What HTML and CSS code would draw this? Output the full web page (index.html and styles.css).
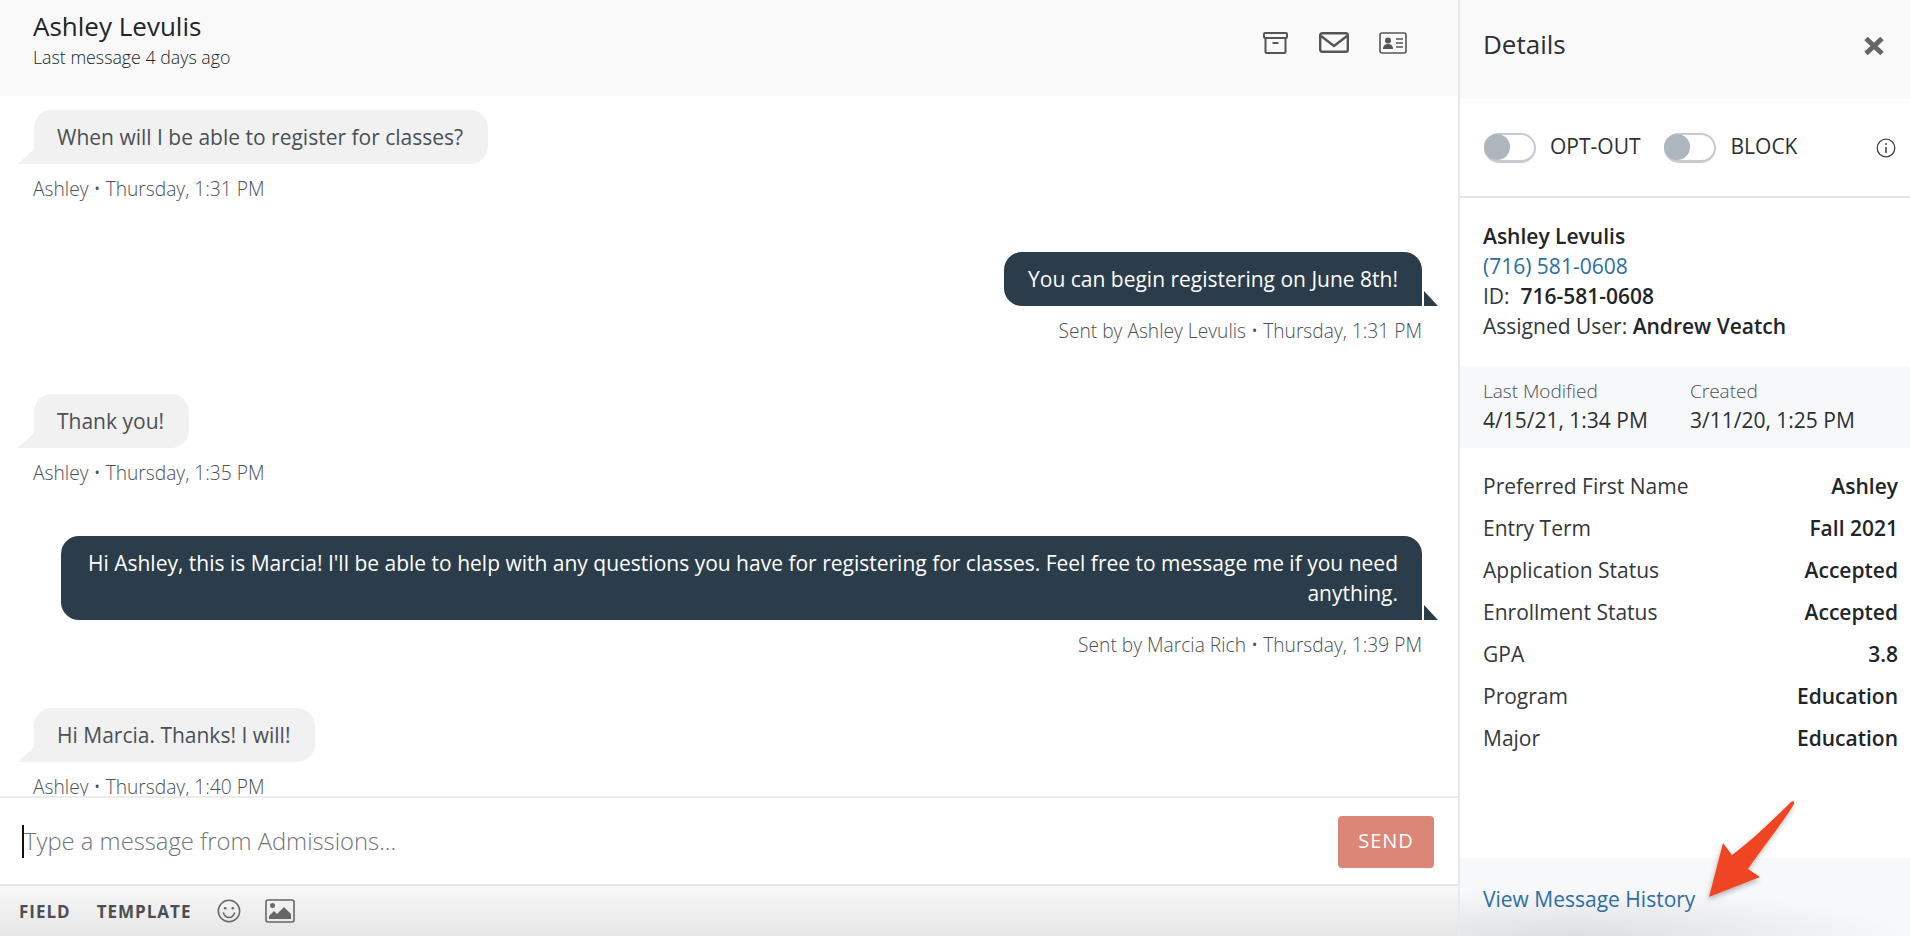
FILE: index.html
```html
<!DOCTYPE html>
<html lang="en">
<head>
<meta charset="utf-8">
<title>Conversation</title>
<link rel="stylesheet" href="styles.css">
</head>
<body>
<div class="app">
  <main class="chat">
    <header class="chat-head">
      <div class="who">
        <div class="who-name">Ashley Levulis</div>
        <div class="who-sub">Last message 4 days ago</div>
      </div>
      <div class="head-icons">
        <svg class="ic-archive" viewBox="0 0 25 22" fill="none" stroke="#555" stroke-width="2"><rect x="1" y="1" width="23" height="5" rx="1"/><path d="M2.5 6v14a1 1 0 0 0 1 1h18a1 1 0 0 0 1-1V6"/><path d="M9.5 11h6"/></svg>
        <svg class="ic-mail" viewBox="0 0 30 21" fill="none" stroke="#555" stroke-width="2.4"><rect x="1.200" y="1.200" width="27.600" height="18.600" rx="2"/><path d="M2 4l13 10L28 4"/></svg>
        <svg class="ic-card" viewBox="0 0 28 22" fill="none"><rect x="1" y="1" width="26" height="20" rx="2" stroke="#555" stroke-width="1.6"/><circle cx="9" cy="8.5" r="3" fill="#555"/><path d="M4 17c0-3.500 2-5 5-5s5 1.500 5 5z" fill="#555"/><path d="M17 7h7M17 11h7M17 15h7" stroke="#555" stroke-width="1.400"/></svg>
      </div>
    </header>
    <section class="messages">
      <article class="msg in">
        <div class="bubble">When will I be able to register for classes?</div>
        <div class="meta">Ashley • Thursday, 1:31 PM</div>
      </article>
      <article class="msg out">
        <div class="bubble">You can begin registering on June 8th!</div>
        <div class="meta">Sent by Ashley Levulis • Thursday, 1:31 PM</div>
      </article>
      <article class="msg in">
        <div class="bubble">Thank you!</div>
        <div class="meta">Ashley • Thursday, 1:35 PM</div>
      </article>
      <article class="msg out">
        <div class="bubble">Hi Ashley, this is Marcia! I'll be able to help with any questions you have for registering for classes. Feel free to message me if you need anything.</div>
        <div class="meta">Sent by Marcia Rich • Thursday, 1:39 PM</div>
      </article>
      <article class="msg in">
        <div class="bubble">Hi Marcia. Thanks! I will!</div>
        <div class="meta">Ashley • Thursday, 1:40 PM</div>
      </article>
    </section>
    <div class="composer">
      <div class="field"><span class="caret"></span><span class="placeholder">Type a message from Admissions...</span></div>
      <button class="send">SEND</button>
    </div>
    <div class="toolbar">
      <span class="tool">FIELD</span>
      <span class="tool">TEMPLATE</span>
      <svg class="ic-smile" viewBox="0 0 24 24" fill="none" stroke="#666" stroke-width="1.500"><circle cx="12" cy="12" r="10.700"/><circle cx="8.200" cy="9.300" r="1.300" fill="#666" stroke="none"/><circle cx="15.800" cy="9.300" r="1.300" fill="#666" stroke="none"/><path d="M6.500 14c1 3 3 4.500 5.500 4.500s4.500-1.500 5.500-4.500" stroke-linecap="round"/></svg>
      <svg class="ic-image" viewBox="0 0 30 24" fill="none"><rect x="1" y="1" width="28" height="22" rx="2" stroke="#666" stroke-width="1.600"/><circle cx="7.500" cy="6.500" r="2.500" fill="#666"/><path d="M4 20v-3l5-5 3 3 7-7 7 7v5z" fill="#666"/></svg>
    </div>
  </main>
  <aside class="details">
    <div class="det-head">
      <span class="det-title">Details</span>
      <svg class="ic-close" viewBox="0 0 22 20" fill="none" stroke="#666" stroke-width="5"><path d="M3 2.500l16 15M19 2.500l-16 15"/></svg>
    </div>
    <div class="det-toggles">
      <span class="toggle"><span class="knob"></span></span>
      <span class="tog-label">OPT-OUT</span>
      <span class="toggle second"><span class="knob"></span></span>
      <span class="tog-label">BLOCK</span>
      <svg class="ic-info" viewBox="0 0 20 20" fill="none" stroke="#444" stroke-width="1.300"><circle cx="10" cy="10" r="8.800"/><path d="M10 9v6" stroke-width="1.600"/><circle cx="10" cy="6" r="1" fill="#444" stroke="none"/></svg>
    </div>
    <div class="contact">
      <div class="strong">Ashley Levulis</div>
      <div class="phone">(716) 581-0608</div>
      <div>ID:&nbsp; <span class="strong">716-581-0608</span></div>
      <div>Assigned User: <span class="strong">Andrew Veatch</span></div>
    </div>
    <div class="dates">
      <div class="date-col modified"><div class="date-label">Last Modified</div><div>4/15/21, 1:34 PM</div></div>
      <div class="date-col"><div class="date-label">Created</div><div>3/11/20, 1:25 PM</div></div>
    </div>
    <dl class="attrs">
      <div class="attr"><dt>Preferred First Name</dt><dd>Ashley</dd></div>
      <div class="attr"><dt>Entry Term</dt><dd>Fall 2021</dd></div>
      <div class="attr"><dt>Application Status</dt><dd>Accepted</dd></div>
      <div class="attr"><dt>Enrollment Status</dt><dd>Accepted</dd></div>
      <div class="attr"><dt>GPA</dt><dd>3.8</dd></div>
      <div class="attr"><dt>Program</dt><dd>Education</dd></div>
      <div class="attr"><dt>Major</dt><dd>Education</dd></div>
    </dl>
    <div class="det-foot"><a class="history">View Message History</a></div>
  </aside>
  <svg class="arrow" viewBox="1690 790 120 120">
    <defs><filter id="sh" x="-20%" y="-20%" width="140%" height="140%"><feDropShadow dx="-1" dy="3" stdDeviation="2.500" flood-color="#000" flood-opacity="0.280"/></filter></defs>
    <path d="M1709 897L1723 843L1732 855C1750 842 1775 818 1791 802C1793 800 1795 802 1794 804C1782 824 1762 848 1748 869L1760 877Z" fill="#f04423" filter="url(#sh)"/>
  </svg>
</div>
</body>
</html>
```
FILE: styles.css
```css
* { box-sizing: border-box; }
html, body { margin: 0; height: 100%; overflow: hidden; background: #fff; }
body { font-family: "Open Sans", "Liberation Sans", sans-serif; color: #212529; font-size: 21px; }
.app { position: relative; display: flex; width: 1910px; height: 936px; }

.chat { width: 1460px; border-right: 2px solid #e9e9e9; display: flex; flex-direction: column; flex: none; }
.chat-head { height: 96px; background: #f9f9f9; padding: 10px 0 0 33px; display: flex; justify-content: space-between; flex: none; }
.who-name { font-size: 26px; line-height: 33px; color: #212529; }
.who-sub { font-size: 17.800px; line-height: 28px; font-weight: 300; color: #212529; }
.head-icons { display: flex; align-items: flex-start; padding: 22px 51px 0 0; }
.ic-archive { width: 25px; height: 22px; }
.ic-mail { width: 30px; height: 21px; margin-left: 31px; }
.ic-card { width: 28px; height: 22px; margin-left: 30px; }

.messages { flex: 1; min-height: 0; overflow: hidden; padding: 14px 36px 0 33px; display: flex; flex-direction: column; }
.msg { display: flex; flex-direction: column; margin-bottom: 48px; flex: none; }
.msg.in { align-items: flex-start; }
.msg.out { align-items: flex-end; }
.bubble { position: relative; font-size: 21px; line-height: 30px; padding: 12px 24px; border-radius: 18px; max-width: 1361px; }
.msg.in .bubble { background: #f1f1f1; color: #495057; border-bottom-left-radius: 0; margin-left: 1px; padding-left: 23px; padding-right: 25px; }
.msg.out .bubble { background: #2b3c4a; color: #fff; border-bottom-right-radius: 0; text-align: right; }
.bubble::after { content: ""; position: absolute; bottom: 0; width: 16px; height: 15px; }
.msg.in .bubble::after { left: -16px; background: #f1f1f1; clip-path: polygon(100% 0, 100% 100%, 0 100%); }
.msg.out .bubble::after { right: -16px; width: 14px; background: #2b3c4a; clip-path: polygon(0 0, 100% 100%, 0 100%); }
.meta { font-size: 19.200px; font-weight: 300; line-height: 30px; margin-top: 10px; color: #495057; }

.composer { height: 88px; flex: none; border-top: 2px solid #ececec; display: flex; align-items: flex-start; justify-content: space-between; padding: 18px 24px 0 22px; background: #fff; }
.field { display: flex; align-items: center; height: 38px; margin-top: 6px; }
.caret { width: 2px; height: 33px; background: #111; }
.placeholder { font-size: 23.800px; font-weight: 300; color: #6f757a; }
.send { width: 96px; height: 52px; border: 0; border-radius: 4px; background: #dc8677; color: #fff; font: 400 20px "Open Sans", sans-serif; letter-spacing: 1px; padding: 0 0 4px; }

.toolbar { height: 52px; flex: none; border-top: 2px solid #e6e6e6; background: linear-gradient(#f8f8f8, #e5e5e6); display: flex; align-items: center; padding-left: 19px; }
.tool { font-size: 17px; font-weight: 700; letter-spacing: 1px; color: #4a4f53; margin-right: 26px; }
.ic-smile { width: 24px; height: 24px; }
.ic-image { width: 30px; height: 24px; margin-left: 24px; }

.details { flex: 1; min-width: 0; display: flex; flex-direction: column; }
.det-head { height: 99px; background: #f9f9f9; padding: 0 25px 0 23px; display: flex; align-items: flex-start; justify-content: space-between; flex: none; }
.det-title { font-size: 26px; line-height: 33px; margin-top: 28px; color: #2b3034; }
.ic-close { width: 22px; height: 20px; margin-top: 36px; }
.det-toggles { height: 99px; border-bottom: 2px solid #e6e6e6; padding: 0 14px 0 24px; display: flex; align-items: center; flex: none; }
.toggle { width: 52px; height: 30px; border: 2px solid #c6cbd1; border-bottom-width: 3px; border-radius: 15px; background: #fff; display: block; flex: none; }
.toggle.second { margin-left: 23px; }
.knob { display: block; width: 26px; height: 26px; margin: -1px 0 0 -2px; border-radius: 50%; background: #adb5bd; }
.tog-label { font-size: 21px; line-height: 28px; color: #2b3034; margin: 0 0 3px 14px; }
.toggle.second + .tog-label { margin-left: 15px; }
.ic-info { width: 20px; height: 20px; margin-left: auto; }

.contact { padding: 23px 23px 26px; line-height: 30px; color: #33383c; flex: none; }
.strong { font-weight: 600; color: #212529; }
.phone { color: #2d6da3; font-weight: 500; }
.dates { height: 81px; background: #f7f8fa; display: flex; padding: 10px 23px 0; flex: none; line-height: 29px; color: #2b3034; }
.date-col.modified { width: 207px; }
.date-label { font-size: 19px; font-weight: 300; color: #495057; }
.attrs { margin: 17px 0 0; padding: 0 12px 0 23px; flex: none; }
.attr { display: flex; justify-content: space-between; height: 42px; line-height: 42px; color: #33383c; }
.attr dd { margin: 0; font-weight: 600; color: #212529; }
.det-foot { margin-top: auto; height: 78px; padding: 27px 0 0 23px; background: radial-gradient(ellipse 330px 46px at 25% 100%, #dddee0, rgba(247, 248, 250, 0)), #f7f8fa; flex: none; }
.history { color: #2d6da3; font-size: 21px; line-height: 26px; }

.arrow { position: absolute; left: 1690px; top: 790px; width: 120px; height: 120px; overflow: visible; pointer-events: none; }
```
